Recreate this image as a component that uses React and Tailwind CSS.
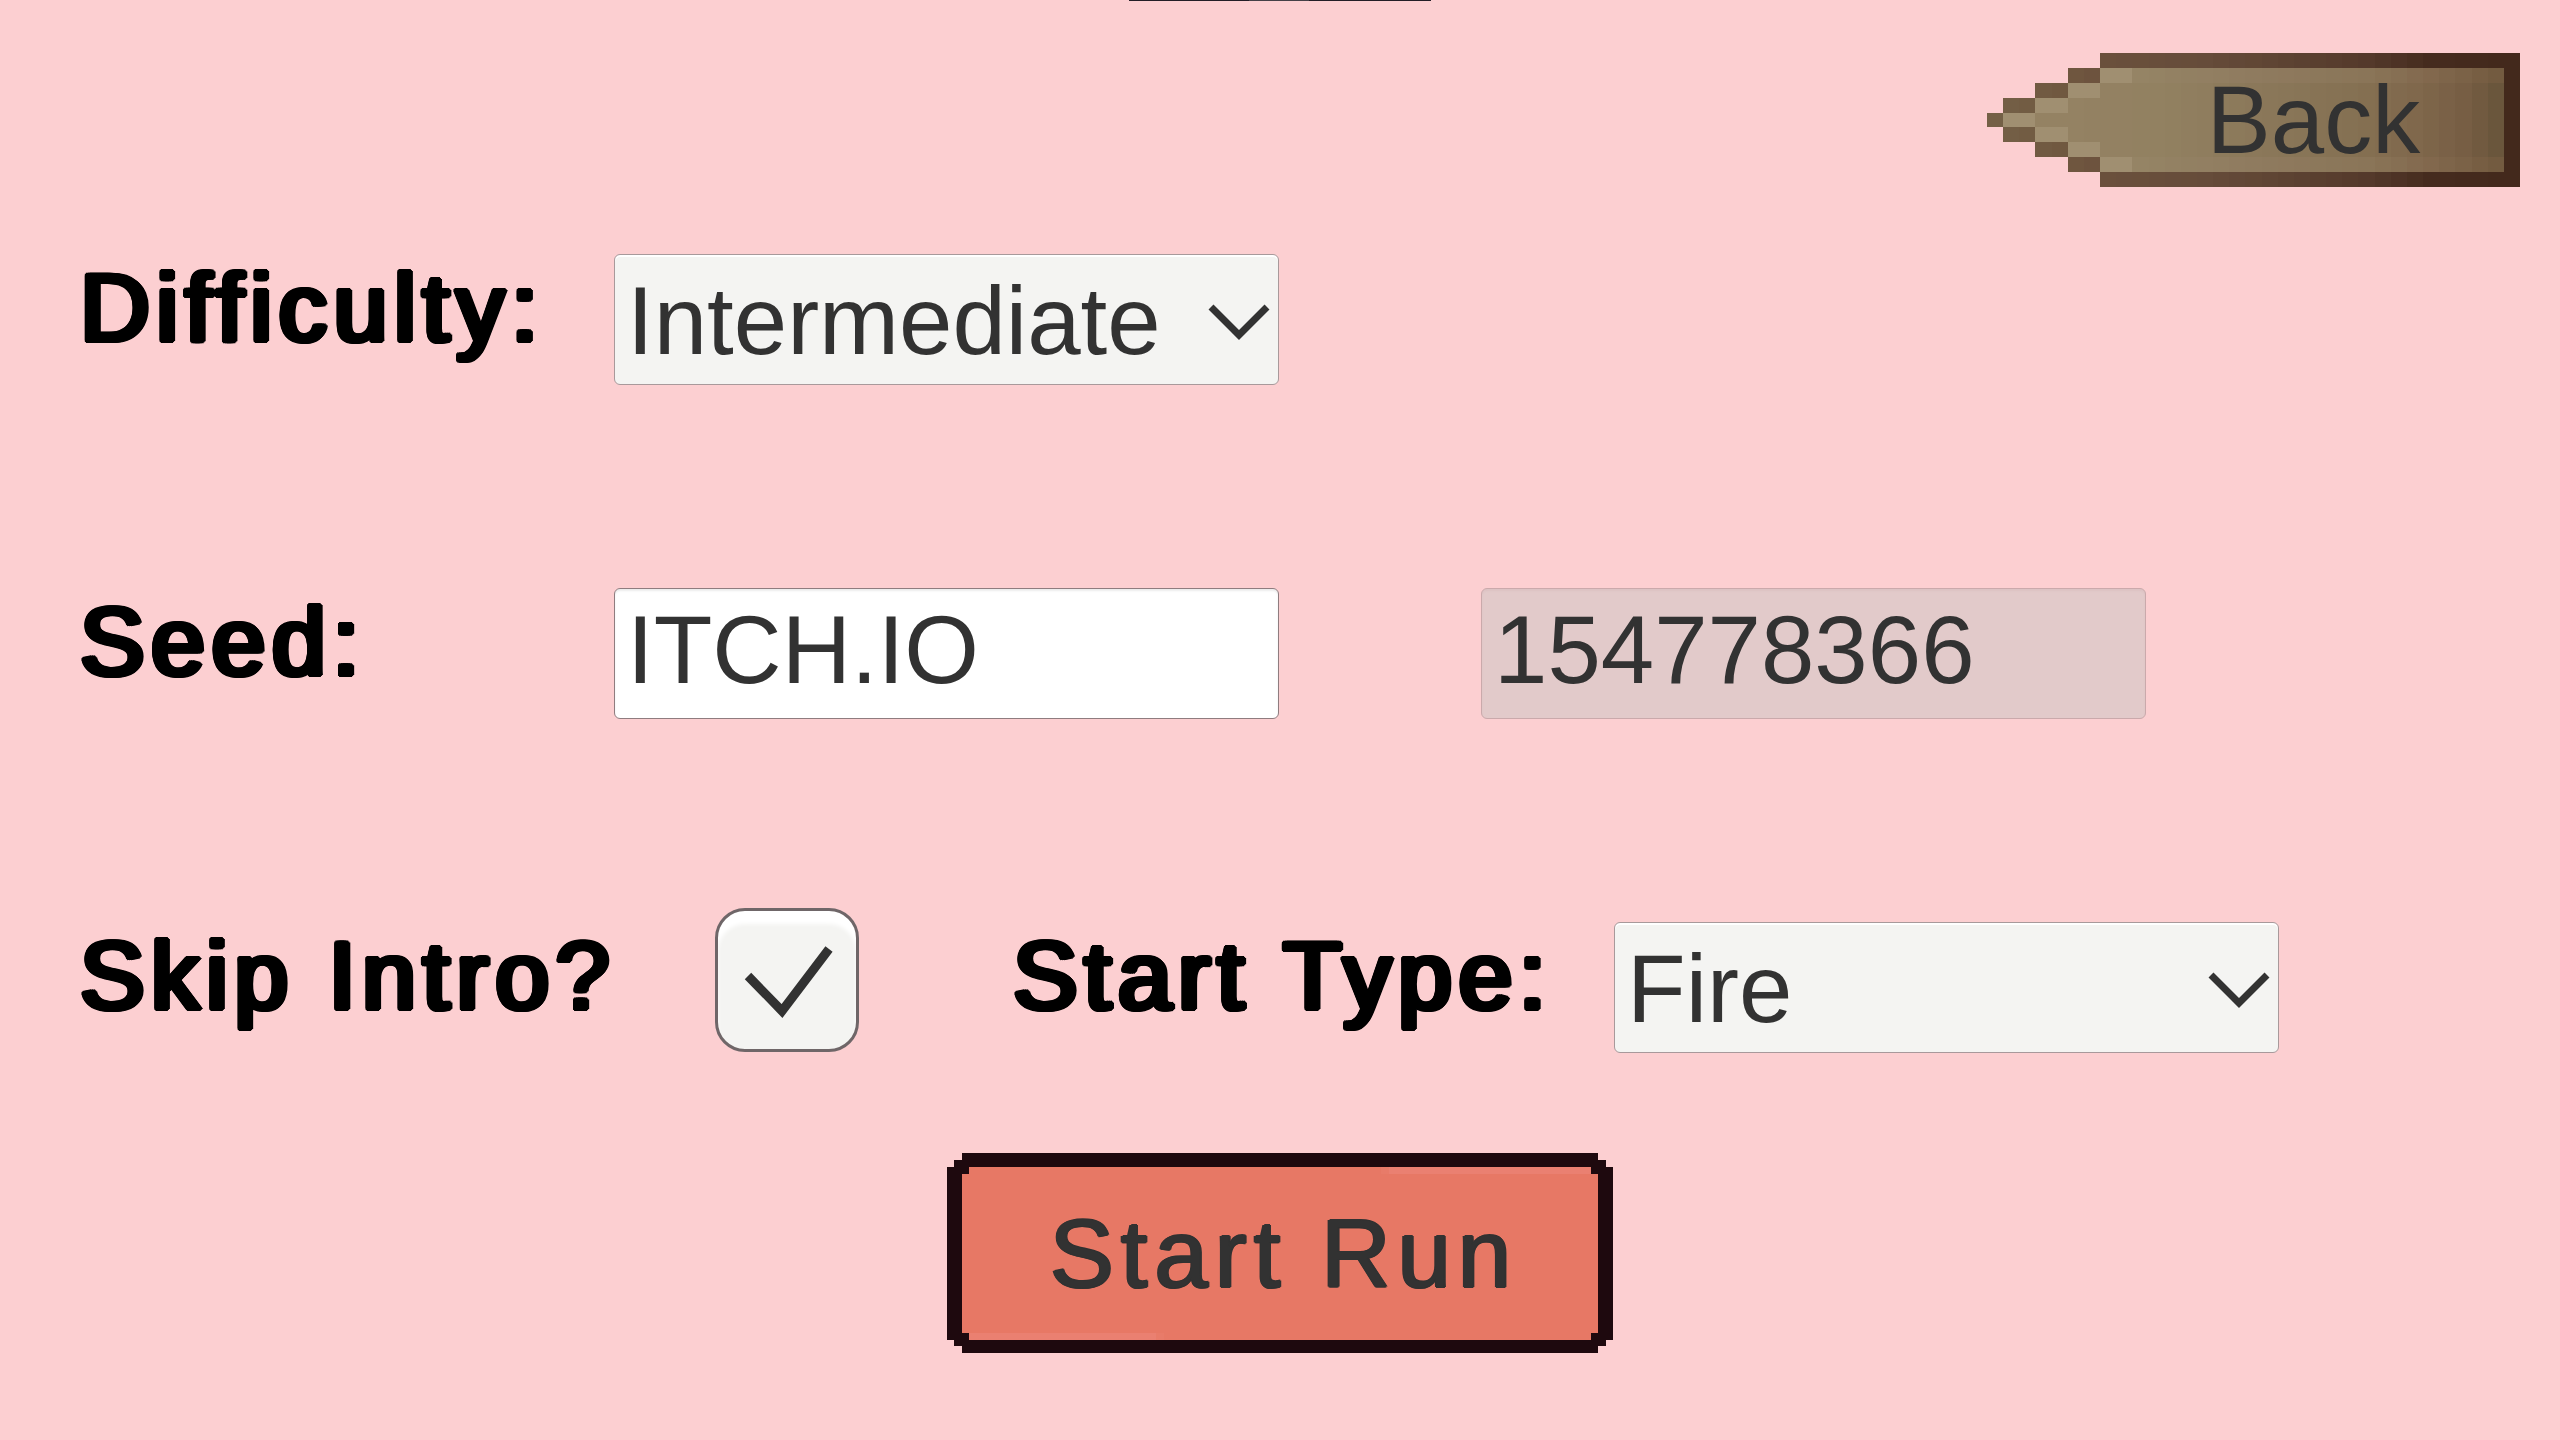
import React, { useState } from 'react';

const DIFFICULTIES = ['Beginner', 'Intermediate', 'Expert'];
const START_TYPES = ['Fire', 'Water', 'Earth', 'Air'];

// Pixel art arrow, 33 x 9 cells. Every row starts further right the further it is from the tip.
const ARROW_COLS = 33;
const ARROW_STARTS = [7, 5, 3, 1, 0, 1, 3, 5, 7];
const RIM = [[0, [116, 96, 70]], [5, [111, 86, 63]], [7, [106, 80, 60]], [13, [102, 76, 58]], [18, [93, 67, 50]], [23, [84, 57, 43]], [27, [69, 43, 30]], [32, [67, 41, 28]]];
const EDGE = [[0, [149, 132, 102]], [9, [149, 132, 101]], [16, [143, 123, 95]], [23, [138, 117, 88]], [27, [130, 104, 77]], [31, [115, 91, 64]]];
const CORE = [[0, [149, 130, 100]], [10, [146, 129, 97]], [16, [139, 120, 90]], [22, [133, 113, 83]], [26, [128, 104, 76]], [29, [119, 94, 68]], [31, [106, 86, 60]]];

const shade = (stops, col) => {
  let i = 0;
  while (i < stops.length - 2 && col > stops[i + 1][0]) i++;
  const [a, from] = stops[i];
  const [b, to] = stops[i + 1];
  const t = Math.min(1, Math.max(0, (col - a) / (b - a)));
  return `rgb(${from.map((c, k) => Math.round(c + (to[k] - c) * t)).join(',')})`;
};

const arrowColor = (row, col) => {
  const start = ARROW_STARTS[row];
  if (row === 0 || row === 8 || col === ARROW_COLS - 1) return shade(RIM, col);
  const rim = row === 4 ? 1 : 2;
  if (col < start + rim) return shade(RIM, col);
  if (col < start + rim + 2) return '#a08f71';
  return shade(row === 1 || row === 7 ? EDGE : CORE, col);
};

const ArrowArt = () => (
  <svg viewBox="0 0 33 9" preserveAspectRatio="none" shapeRendering="crispEdges" aria-hidden="true" className="absolute inset-0 h-full w-full">
    {ARROW_STARTS.map((start, row) =>
      Array.from({ length: ARROW_COLS - start }, (_, i) => (
        <rect key={`${row}-${i}`} x={start + i} y={row} width="1" height="1" fill={arrowColor(row, start + i)} />
      ))
    )}
  </svg>
);

const FrameArt = () => (
  <svg viewBox="0 0 666 200" preserveAspectRatio="none" shapeRendering="crispEdges" aria-hidden="true" className="absolute inset-0 h-full w-full">
    <path fill="#1e090e" d="M15 0H651V7H659V14H666V187H659V193H651V200H15V193H7V187H0V14H7V7H15Z" />
    <path fill="#e77865" d="M22 14H644V21H651V180H644V187H22V180H15V21H22Z" />
    <path fill="#ea8071" d="M442 14H644V21H442ZM22 180H209V187H22Z" />
    <path fill="#e87b69" d="M434 14H442V21H434ZM209 180H217V187H209Z" />
  </svg>
);

const Label = ({ htmlFor, className, children }) => (
  <label
    htmlFor={htmlFor}
    className={`${className} shrink-0 whitespace-nowrap pb-6 leading-none tracking-[7px] text-black [text-shadow:4px_0_#000,-3px_0_#000,3px_1px_#000,3px_-1px_#000,-3px_1px_#000,-3px_-1px_#000,2px_2px_#000,2px_-2px_#000,-2px_2px_#000,-2px_-2px_#000,0_2px_#000,0_-2px_#000]`}
  >
    {children}
  </label>
);

const Dropdown = ({ id, value, onChange, options }) => (
  <div className="relative w-[665px]">
    <select
      id={id}
      value={value}
      onChange={(e) => onChange(e.target.value)}
      className="block h-[131px] w-full appearance-none rounded-md border border-[#a8999b] bg-[#f4f4f2] pl-3 pr-20 pt-[2px] shadow-[inset_0_2px_0_#ffffff] outline-none"
    >
      {options.map((o) => (
        <option key={o}>{o}</option>
      ))}
    </select>
    <svg viewBox="0 0 64 64" fill="none" stroke="#323232" strokeWidth="7" aria-hidden="true" className="pointer-events-none absolute right-2 top-[33px] h-16 w-16">
      <path d="M4 20L32 48L60 20" />
    </svg>
  </div>
);

export default function App() {
  const [difficulty, setDifficulty] = useState('Intermediate');
  const [seed, setSeed] = useState('ITCH.IO');
  const [skipIntro, setSkipIntro] = useState(true);
  const [startType, setStartType] = useState('Fire');

  return (
    <div className="min-h-screen w-full bg-[#fccfd1] font-['Liberation_Sans',Arial,sans-serif] text-[96px] leading-none text-[#323232]">
      {/* Bottom edge of the panel above */}
      <div className="mx-auto flex h-px w-[302px] bg-[#231d26]">
        <div className="ml-[120px] w-[60px] bg-[#454047]" />
      </div>

      <header className="flex justify-end pr-10 pt-[52px]">
        <button type="button" className="relative h-[134px] w-[533px] pl-[120px]">
          <ArrowArt />
          <span className="relative">Back</span>
        </button>
      </header>

      <form onSubmit={(e) => e.preventDefault()} className="mt-[67px] px-20">
        <div className="flex flex-col gap-[203px]">
          <div className="flex items-center">
            <Label htmlFor="difficulty" className="w-[534px]">Difficulty:</Label>
            <Dropdown id="difficulty" value={difficulty} onChange={setDifficulty} options={DIFFICULTIES} />
          </div>

          <div className="flex items-center">
            <Label htmlFor="seed" className="w-[534px]">Seed:</Label>
            <input
              id="seed"
              type="text"
              value={seed}
              onChange={(e) => setSeed(e.target.value)}
              className="h-[131px] w-[665px] rounded-md border border-[#8f7c7f] bg-white pb-[7px] pl-3 shadow-[inset_0_2px_2px_#ececec] outline-none"
            />
            <input
              type="text"
              readOnly
              aria-label="Seed number"
              value="154778366"
              className="ml-[202px] h-[131px] w-[665px] rounded-md border border-[#caa9ab] bg-[#e2caca] pb-[7px] pl-3 shadow-[inset_0_2px_2px_#dcc2c3] outline-none"
            />
          </div>

          <div className="flex items-center">
            <Label htmlFor="skip" className="w-[635px]">Skip Intro?</Label>
            <div className="-mt-[14px] mb-px grid h-36 w-36">
              <input
                id="skip"
                type="checkbox"
                checked={skipIntro}
                onChange={(e) => setSkipIntro(e.target.checked)}
                className="col-start-1 row-start-1 h-36 w-36 appearance-none rounded-[30px] border-3 border-[#6f6668] bg-[#f4f4f2] shadow-[inset_0_13px_4px_#ffffff] outline-none"
              />
              {skipIntro && (
                <svg viewBox="0 0 144 144" fill="none" stroke="#323232" strokeWidth="9" aria-hidden="true" className="pointer-events-none col-start-1 row-start-1 h-36 w-36">
                  <path d="M33 68L67 103L114 41" />
                </svg>
              )}
            </div>
            <Label htmlFor="start-type" className="ml-[154px] w-[601px]">Start Type:</Label>
            <Dropdown id="start-type" value={startType} onChange={setStartType} options={START_TYPES} />
          </div>
        </div>

        <button type="submit" className="relative mx-auto mt-[100px] block h-[200px] w-[666px] pl-[7px] pt-[2px] tracking-[7px] [text-shadow:-1px_0_#323232,1px_0_#323232,2px_0_#323232,0_1px_#323232,1px_1px_#323232,1px_-1px_#323232]">
          <FrameArt />
          <span className="relative">Start Run</span>
        </button>
      </form>
    </div>
  );
}
